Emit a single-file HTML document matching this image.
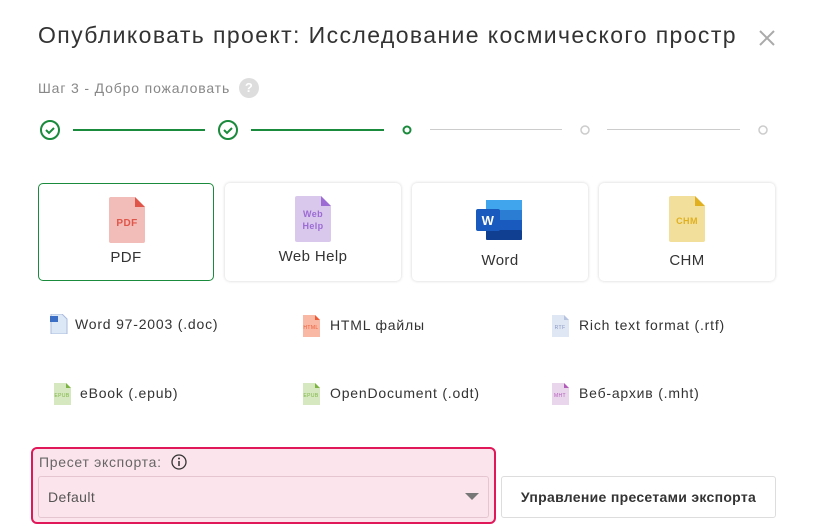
<!DOCTYPE html>
<html><head><meta charset="utf-8"><style>
*{box-sizing:border-box;margin:0;padding:0}
body{width:816px;height:531px;background:#fff;font-family:"Liberation Sans",sans-serif;color:#333;position:relative;overflow:hidden;letter-spacing:0.4px}
.a{position:absolute}
.title{left:38px;top:22px;font-size:23px;letter-spacing:1.4px;color:#333;white-space:nowrap;width:714px;overflow:hidden}
.card{position:absolute;top:183px;width:176px;height:98px;border-radius:5px;box-shadow:0 0 3px rgba(0,0,0,.18);background:#fff;text-align:center;font-size:15px;color:#333}
.card.sel{border:1px solid #1a8a3c;box-shadow:none}
.card svg{position:absolute;left:70px;top:13px}
.card span{position:absolute;left:0;right:0;top:65px}
.item{position:absolute;font-size:14px;color:#333;white-space:nowrap;letter-spacing:0.8px}
.line{position:absolute;top:129px;height:2px}
</style></head><body>
<div class="a title">Опубликовать проект: Исследование космического простр</div>
<svg class="a" style="left:757px;top:28px" width="20" height="20"><path d="M3 3L17 17M17 3L3 17" stroke="#aaa" stroke-width="2"/></svg>
<div class="a" style="left:38px;top:80px;font-size:14px;color:#888;letter-spacing:0.85px">Шаг 3 - Добро пожаловать</div>
<div class="a" style="left:239px;top:78px;width:20px;height:20px;border-radius:50%;background:#ddd;color:#fff;font-size:13px;font-weight:bold;text-align:center;line-height:20px">?</div>
<svg class="a" style="left:40px;top:120px" width="740" height="22">
<g fill="none" stroke="#1a8a3c" stroke-width="2"><circle cx="10" cy="10" r="9"/><path d="M6 10l3 3 5-5"/><circle cx="188" cy="10" r="9"/><path d="M184 10l3 3 5-5"/><circle cx="367" cy="10" r="3.5"/></g>
<g fill="none" stroke="#ccc" stroke-width="1.5"><circle cx="545" cy="10" r="4"/><circle cx="723" cy="10" r="4"/></g>
</svg>
<div class="line" style="left:73px;width:132px;background:#1a8a3c"></div>
<div class="line" style="left:251px;width:133px;background:#1a8a3c"></div>
<div class="line" style="left:430px;width:132px;height:1px;background:#ccc"></div>
<div class="line" style="left:607px;width:133px;height:1px;background:#ccc"></div>

<div class="card sel" style="left:38px"><svg width="36" height="46"><path d="M2 0h24l10 10v34a2 2 0 0 1-2 2H2a2 2 0 0 1-2-2V2a2 2 0 0 1 2-2z" fill="#f2bcb8"/><path d="M26 0l10 10H26z" fill="#e0554a"/><text x="18" y="29" font-size="10" font-weight="bold" fill="#e0554a" text-anchor="middle" font-family="Liberation Sans">PDF</text></svg><span>PDF</span></div>
<div class="card" style="left:225px"><svg width="36" height="46"><path d="M2 0h24l10 10v34a2 2 0 0 1-2 2H2a2 2 0 0 1-2-2V2a2 2 0 0 1 2-2z" fill="#d9c8ec"/><path d="M26 0l10 10H26z" fill="#9c6bd4"/><text x="18" y="21" font-size="9" font-weight="bold" fill="#9c6bd4" text-anchor="middle" font-family="Liberation Sans">Web</text><text x="18" y="33" font-size="9" font-weight="bold" fill="#9c6bd4" text-anchor="middle" font-family="Liberation Sans">Help</text></svg><span style="top:65px">Web Help</span></div>
<div class="card" style="left:412px"><svg width="48" height="42" style="left:64px;top:17px"><rect x="10" y="0" width="36" height="40" rx="2" fill="#2b7cd3"/><rect x="10" y="0" width="36" height="10" fill="#41a5ee"/><rect x="10" y="20" width="36" height="10" fill="#185abd"/><rect x="10" y="30" width="36" height="10" rx="1" fill="#103f91"/><rect x="0" y="9" width="24" height="22" rx="2" fill="#185abd"/><text x="12" y="25" font-size="13" font-weight="bold" fill="#fff" text-anchor="middle" font-family="Liberation Sans">W</text></svg><span style="top:69px">Word</span></div>
<div class="card" style="left:599px"><svg width="36" height="46"><path d="M2 0h24l10 10v34a2 2 0 0 1-2 2H2a2 2 0 0 1-2-2V2a2 2 0 0 1 2-2z" fill="#f2df9b"/><path d="M26 0l10 10H26z" fill="#e0b020"/><text x="18" y="28" font-size="9" font-weight="bold" fill="#e0b020" text-anchor="middle" font-family="Liberation Sans">CHM</text></svg><span style="top:69px">CHM</span></div>

<svg class="a" style="left:49px;top:314px" width="20" height="20"><path d="M2 0h11l5 5v15H2z" fill="#dde8f6" stroke="#aabbdd"/><rect x="1" y="2" width="8" height="6" fill="#3b6fc6"/></svg>
<div class="item" style="left:75px;top:316px">Word 97-2003 (.doc)</div>
<svg class="a" style="left:302px;top:315px" width="18" height="22"><path d="M1 0h12l5 5v17H1z" fill="#f8b8a4"/><path d="M13 0l5 5h-5z" fill="#ee5a36"/><text x="9" y="14" font-size="5" fill="#ee5a36" text-anchor="middle" font-family="Liberation Sans">HTML</text></svg>
<div class="item" style="left:330px;top:317px">HTML файлы</div>
<svg class="a" style="left:551px;top:315px" width="18" height="22"><path d="M1 0h12l5 5v17H1z" fill="#dfe6f4"/><path d="M13 0l5 5h-5z" fill="#b7c4e0"/><text x="9" y="14" font-size="5" fill="#8898c0" text-anchor="middle" font-family="Liberation Sans">RTF</text></svg>
<div class="item" style="left:579px;top:317px">Rich text format (.rtf)</div>

<svg class="a" style="left:53px;top:383px" width="18" height="22"><path d="M1 0h12l5 5v17H1z" fill="#d6e8c0"/><path d="M13 0l5 5h-5z" fill="#7cb342"/><text x="9" y="14" font-size="5" fill="#7cb342" text-anchor="middle" font-family="Liberation Sans">EPUB</text></svg>
<div class="item" style="left:80px;top:385px">eBook (.epub)</div>
<svg class="a" style="left:302px;top:383px" width="18" height="22"><path d="M1 0h12l5 5v17H1z" fill="#d6e8c0"/><path d="M13 0l5 5h-5z" fill="#7cb342"/><text x="9" y="14" font-size="5" fill="#7cb342" text-anchor="middle" font-family="Liberation Sans">EPUB</text></svg>
<div class="item" style="left:330px;top:385px">OpenDocument (.odt)</div>
<svg class="a" style="left:551px;top:383px" width="18" height="22"><path d="M1 0h12l5 5v17H1z" fill="#ead6ec"/><path d="M13 0l5 5h-5z" fill="#b05cb8"/><text x="9" y="14" font-size="5" fill="#b05cb8" text-anchor="middle" font-family="Liberation Sans">MHT</text></svg>
<div class="item" style="left:579px;top:385px">Веб-архив (.mht)</div>

<div class="a" style="left:31px;top:447px;width:465px;height:77px;border:2px solid #e0185a;border-radius:6px;background:#fce4ec"></div>
<div class="a" style="left:39px;top:454px;font-size:14px;color:#666;letter-spacing:0.7px">Пресет экспорта:</div>
<svg class="a" style="left:170px;top:453px" width="18" height="18"><circle cx="9" cy="9" r="7" fill="none" stroke="#333" stroke-width="1.3"/><path d="M9 8v5" stroke="#333" stroke-width="1.5"/><circle cx="9" cy="5.5" r="1" fill="#333"/></svg>
<div class="a" style="left:38px;top:476px;width:451px;height:42px;border:1px solid #e5c6d0;border-radius:3px"></div>
<div class="a" style="left:48px;top:489px;font-size:14px;color:#555">Default</div>
<svg class="a" style="left:465px;top:493px" width="14" height="8"><path d="M0 0h14L7 7z" fill="#777"/></svg>
<div class="a" style="left:501px;top:476px;width:275px;height:42px;border:1px solid #ddd;border-radius:3px;font-size:14px;font-weight:bold;color:#333;text-align:center;line-height:40px;letter-spacing:0.3px">Управление пресетами экспорта</div>
</body></html>
